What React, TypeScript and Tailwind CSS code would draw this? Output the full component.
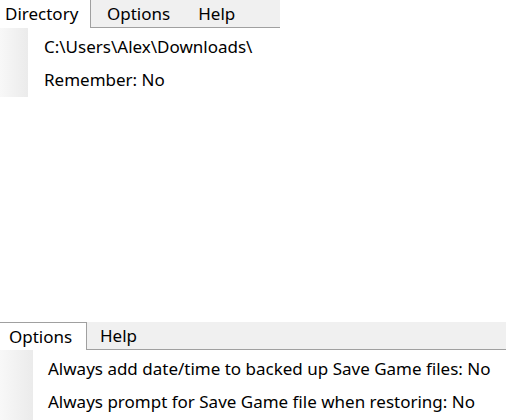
const font = { fontFamily: '"Noto Sans", "Open Sans", sans-serif' }

function MenuBar({
  active,
  activeWidth,
  items,
  width,
  topBorder,
}: {
  active: string
  activeWidth: string
  items: { label: string; className: string }[]
  width: string
  topBorder: boolean
}) {
  return (
    <div className={`flex h-[28px] ${width} text-[17px] text-black`}>
      <div
        className={`flex ${activeWidth} shrink-0 items-center border-r border-[#a0a0a0] bg-white ${
          topBorder ? 'border-t' : ''
        }`}
      >
        {active}
      </div>
      <div className="flex flex-1 items-center border-b border-[#a0a0a0] bg-[#f0f0f0]">
        {items.map((item) => (
          <span key={item.label} className={item.className}>
            {item.label}
          </span>
        ))}
      </div>
    </div>
  )
}

function Dropdown({
  rows,
  width,
  gutter,
  textPad,
  height,
}: {
  rows: string[]
  width: string
  gutter: string
  textPad: string
  height: string
}) {
  return (
    <div className={`flex ${width} ${height} bg-white text-[17px] text-black`}>
      <div className={`${gutter} shrink-0 bg-gradient-to-r from-[#f8f8f8] to-[#ebebeb]`} />
      <div className={`flex flex-1 flex-col pt-[2px] ${textPad}`}>
        {rows.map((row) => (
          <div key={row} className="flex h-[33px] items-center whitespace-nowrap">
            {row}
          </div>
        ))}
      </div>
    </div>
  )
}

export default function App() {
  return (
    <div className="flex h-[420px] w-[506px] flex-col overflow-hidden bg-white" style={font}>
      <MenuBar
        active="Directory"
        activeWidth="w-[91px] pl-[5px]"
        width="w-[280px]"
        topBorder={false}
        items={[
          { label: 'Options', className: 'ml-[16px]' },
          { label: 'Help', className: 'ml-[28px]' },
        ]}
      />
      <Dropdown
        rows={['C:\\Users\\Alex\\Downloads\\', 'Remember: No']}
        width="w-[280px]"
        height="h-[69px]"
        gutter="w-[28px]"
        textPad="pl-[16px]"
      />

      <div className="h-[225px] shrink-0" />

      <MenuBar
        active="Options"
        activeWidth="w-[87px] pl-[9px]"
        width="w-[506px]"
        topBorder={true}
        items={[{ label: 'Help', className: 'ml-[13px]' }]}
      />
      <Dropdown
        rows={[
          'Always add date/time to backed up Save Game files: No',
          'Always prompt for Save Game file when restoring: No',
        ]}
        width="w-[506px]"
        height="h-[70px]"
        gutter="w-[33px]"
        textPad="pl-[15px]"
      />
    </div>
  )
}
